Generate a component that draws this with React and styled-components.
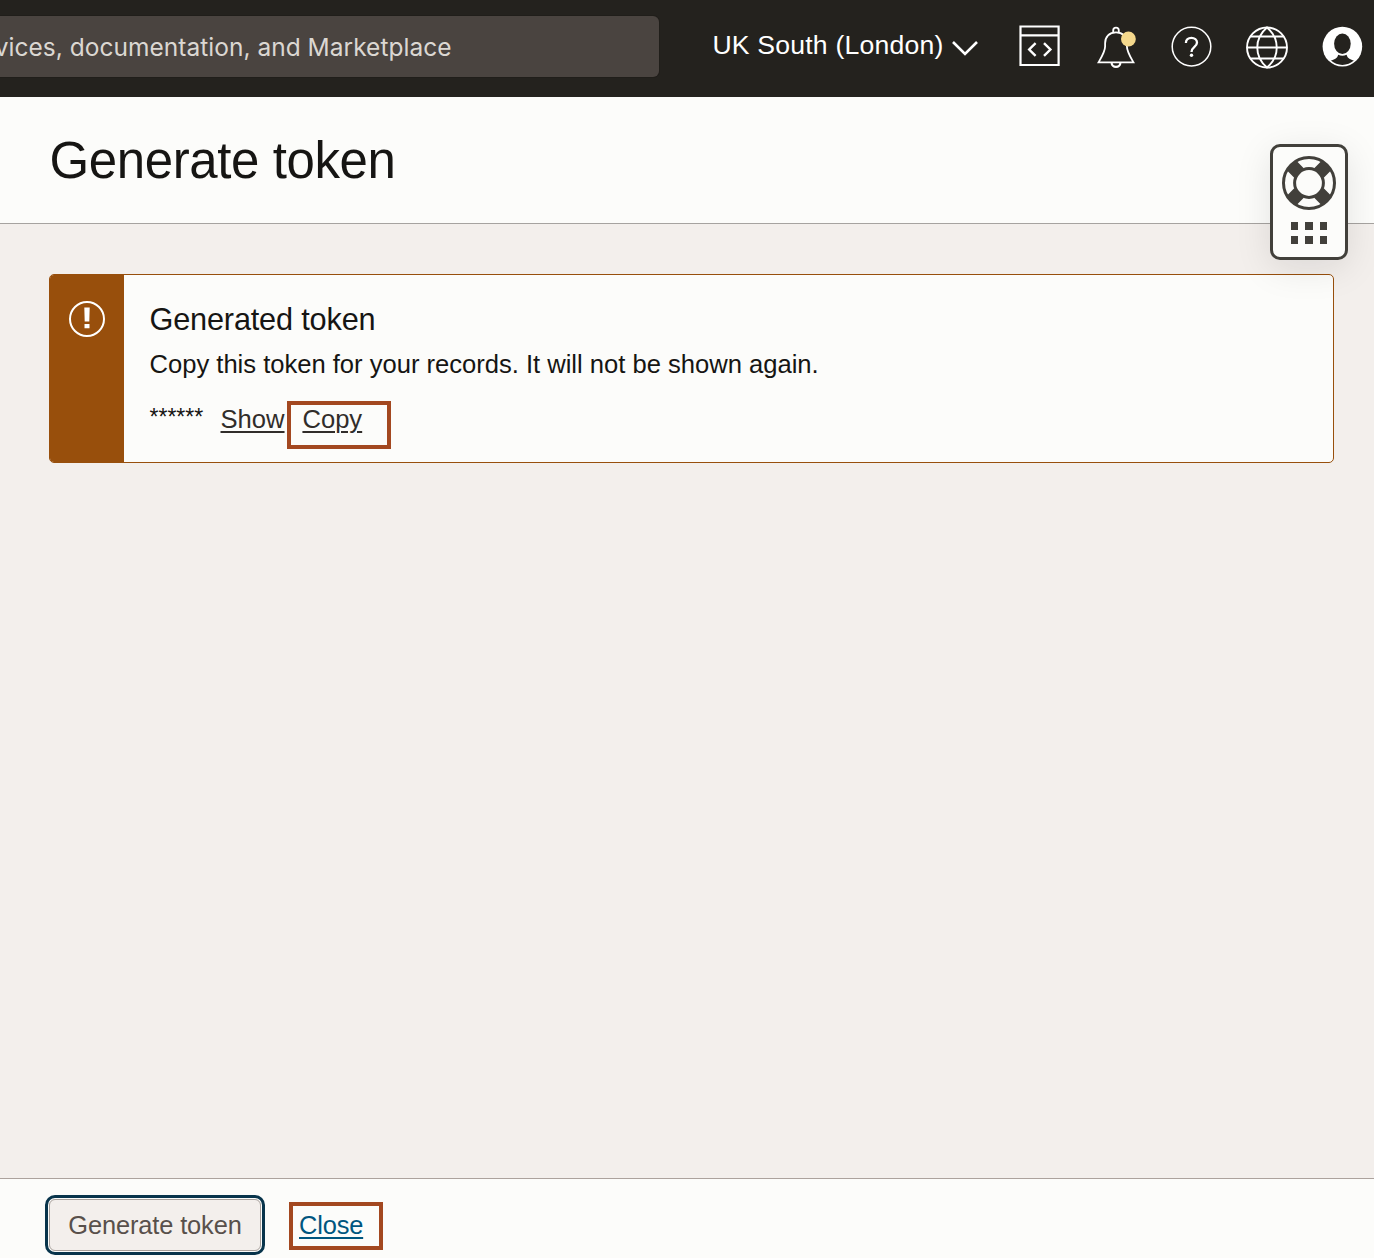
import React from "react";
import styled, { createGlobalStyle } from "styled-components";

const GlobalStyle = createGlobalStyle`
  *, *::before, *::after { box-sizing: border-box; }
  body {
    margin: 0;
    background: #f3efec;
    font-family: "Liberation Sans", Arial, sans-serif;
    color: #161513;
    overflow: hidden;
  }
  h1, h2, p { margin: 0; font-weight: 400; }
`;

const Page = styled.div`
  position: relative;
  display: flex;
  flex-direction: column;
  height: 1258px;
  overflow: hidden;
`;

const TopBar = styled.header`
  display: flex;
  align-items: flex-start;
  flex: none;
  height: 97px;
  background: #24221e;
`;

const SearchBox = styled.div`
  display: flex;
  align-items: center;
  justify-content: flex-end;
  width: 659px;
  height: 61px;
  margin-top: 16px;
  padding: 2px 207.5px 0 0;
  border-radius: 0 6px 6px 0;
  background: #4a4440;
  box-shadow: 0 0 0 1px #201e1a;
  color: #dbd7d2;
  overflow: hidden;
  white-space: nowrap;
  font: 400 24.5px/59px Inter, "Liberation Sans", sans-serif;
  letter-spacing: 0.02px;
`;

const Region = styled.button`
  display: flex;
  align-items: flex-start;
  gap: 8.6px;
  margin: 29px 0 0 53.4px;
  padding: 0;
  border: 0;
  background: none;
  color: #fff;
  white-space: nowrap;
  font: 400 26.6px/32px "Liberation Sans", Arial, sans-serif;
  letter-spacing: 0.2px;
  svg { margin-top: 9.5px; flex: none; }
`;

const Tools = styled.nav`
  display: flex;
  align-items: center;
  gap: 31px;
  height: 48px;
  margin: 23px 10px 0 auto;
`;

const Tool = styled.span`
  display: flex;
  width: 44px;
  height: 48px;
  svg { overflow: visible; }
`;

const TitleBar = styled.div`
  flex: none;
  height: 127px;
  padding: 35px 49px 0 49.5px;
  border-bottom: 1px solid #a6a3a0;
  background: #fcfcfa;
`;

const Title = styled.h1`
  font-size: 51px;
  line-height: 58px;
  letter-spacing: -0.4px;
`;

const Body = styled.main`
  flex: 1;
  padding: 50px 40px 0 49px;
  background: #f3efec;
`;

const Notice = styled.section`
  display: flex;
  height: 189px;
  border: 1px solid #984f0c;
  border-radius: 5px;
  background: #fcfcfa;
  overflow: hidden;
`;

const NoticeStripe = styled.div`
  display: flex;
  justify-content: center;
  width: 74px;
  padding-top: 25px;
  background: #984f0c;
`;

const NoticeText = styled.div`
  padding: 27px 0 0 25.5px;
`;

const NoticeTitle = styled.h2`
  font-size: 30.7px;
  line-height: 36px;
  letter-spacing: -0.18px;
`;

const NoticeLine = styled.p`
  margin-top: 10px;
  font-size: 25.6px;
  line-height: 32px;
  letter-spacing: -0.015px;
  white-space: nowrap;
`;

const TokenRow = styled.div`
  display: flex;
  align-items: flex-start;
  margin-top: 23px;
  font-size: 25.6px;
  line-height: 32px;
`;

const Mask = styled.span`
  width: 71px;
  margin-top: -2px;
  font-size: 23px;
`;

const Link = styled.a`
  color: ${(p) => p.$color || "#312d2a"};
  text-decoration: underline;
  text-decoration-thickness: 2px;
  text-underline-offset: 3px;
`;

const Highlight = styled.span`
  display: flex;
  flex: none;
  width: ${(p) => p.$width}px;
  height: 48px;
  padding: ${(p) => p.$pad};
  border: 4px solid #a34820;
`;

const CopyHighlight = styled(Highlight)`
  margin: -2px 0 0 2.5px;
  line-height: 28px;
`;

const Footer = styled.footer`
  display: flex;
  flex: none;
  height: 80px;
  padding: 16px 45px 0;
  gap: 24px;
  border-top: 1px solid #aca29d;
  background: #fcfcfa;
  font-size: 25.4px;
  line-height: 32px;
`;

const FocusRing = styled.div`
  width: 220px;
  height: 60px;
  padding: 1px;
  border: 3px solid #08344b;
  border-radius: 10px;
`;

const GenerateButton = styled.button`
  display: block;
  width: 100%;
  height: 100%;
  padding: 0;
  border: 1px solid #a79f9a;
  border-radius: 6px;
  background: #f3efec;
  color: #58504b;
  font: 400 25.4px/50px "Liberation Sans", Arial, sans-serif;
  letter-spacing: -0.12px;
  white-space: nowrap;
`;

const CloseHighlight = styled(Highlight)`
  margin-top: 7px;
  letter-spacing: -0.15px;
`;

const HelpWidget = styled.aside`
  position: absolute;
  left: 1270px;
  top: 144px;
  display: flex;
  flex-direction: column;
  align-items: center;
  width: 78px;
  height: 116px;
  padding-top: 9px;
  border: 3px solid #42403b;
  border-radius: 10px;
  background: #fcfcfa;
  box-shadow: 0 8px 36px rgba(22, 21, 19, 0.1);
`;

const DotGrid = styled.div`
  display: grid;
  grid-template-columns: 7px 8px 7px;
  gap: 6px 7px;
  margin-top: 12px;
`;

const Dot = styled.i`
  height: 8px;
  background: #42403b;
`;

const Chevron = () => (
  <svg width="26" height="18" viewBox="0 0 26 18" fill="none" stroke="#fff" strokeWidth="2.6">
    <path d="M1 3 13 15 25 3" />
  </svg>
);

const ConsoleIcon = () => (
  <svg width="44" height="48" viewBox="0 0 44 48" fill="none" stroke="#fff" strokeWidth="2.2">
    <path d="M.5 3.5H38.6V42H.5ZM.5 12.3H38.6" />
    <path d="M15.6 20.2 9.2 26.5 15.6 32.8M24 20.2 30.4 26.5 24 32.8" strokeWidth="2.4" />
  </svg>
);

const BellIcon = () => (
  <svg width="44" height="48" viewBox="0 0 44 48" fill="none" stroke="#fff" strokeWidth="1.8">
    <g transform="translate(-1 0)">
      <path d="M19.2 9.6V7.5a2.8 2.8 0 0 1 5.6 0V9.6" />
      <path d="M4.6 39.3C8.5 32.6 11.1 28.3 11.1 23.5V20.3C11.1 13.6 15.3 9.3 22 9.3S32.9 13.6 32.9 20.3V23.5C32.9 28.3 35.5 32.6 39.4 39.3Z" />
      <path d="M17.6 39.5a4.4 4.4 0 0 0 8.8 0" strokeWidth="2.2" />
      <circle cx="34.4" cy="16" r="7.4" fill="#f4d88c" stroke="none" />
    </g>
  </svg>
);

const QuestionIcon = () => (
  <svg width="44" height="48" viewBox="0 0 44 48" fill="none" stroke="#fff">
    <circle cx="21.5" cy="23.6" r="19.3" strokeWidth="1.5" />
    <path d="M15.9 19.9C15.9 16.7 18.3 14.9 21.4 14.9S27 16.8 27 19.6C27 24.2 21.5 23.6 21.5 29.1" strokeWidth="2.3" />
    <circle cx="21.5" cy="32.3" r="1.7" fill="#fff" stroke="none" />
  </svg>
);

const GlobeIcon = () => (
  <svg width="44" height="48" viewBox="0 0 44 48" fill="none" stroke="#fff" strokeWidth="1.9">
    <circle cx="22" cy="24.5" r="20" />
    <path d="M22 4.5C9 15.5 9 33.5 22 44.5C35 33.5 35 15.5 22 4.5ZM2 24.5H42M5.5 13.5H38.5M5.5 35.5H38.5" />
  </svg>
);

const UserIcon = () => (
  <svg width="44" height="48" viewBox="0 0 44 48">
    <circle cx="22.4" cy="23.6" r="19.8" fill="#fff" />
    <ellipse cx="22.4" cy="20.7" rx="8.3" ry="10.3" fill="#24221e" />
    <path d="M10.9 37.6C14 36.4 17.3 35.6 18.2 31.7Q22.4 34 26.6 31.7C27.5 35.6 30.8 36.4 33.9 37.6C28 43.3 16.8 43.3 10.9 37.6Z" fill="#24221e" />
  </svg>
);

const AlertIcon = () => (
  <svg width="38" height="38" viewBox="0 0 38 38">
    <circle cx="19" cy="19" r="17" fill="none" stroke="#fff" strokeWidth="2" />
    <path d="M16.3 7.5H21.7L21.3 21.4H16.7ZM16.5 24H21.5V28.2H16.5Z" fill="#fff" />
  </svg>
);

const LifebuoyIcon = () => (
  <svg width="54" height="54" viewBox="0 0 54 54" fill="none" stroke="#42403b">
    <circle cx="27" cy="27" r="25.5" strokeWidth="3" />
    <circle cx="27" cy="27" r="14.4" strokeWidth="3" />
    <path d="M17 17 9.6 9.6M37 17 44.4 9.6M17 37 9.6 44.4M37 37 44.4 44.4" strokeWidth="13.5" />
  </svg>
);

export default function App() {
  return (
    <>
      <GlobalStyle />
      <Page>
        <TopBar>
          <SearchBox>vices, documentation, and Marketplace</SearchBox>
          <Region>
            UK South (London)
            <Chevron />
          </Region>
          <Tools>
            <Tool><ConsoleIcon /></Tool>
            <Tool><BellIcon /></Tool>
            <Tool><QuestionIcon /></Tool>
            <Tool><GlobeIcon /></Tool>
            <Tool><UserIcon /></Tool>
          </Tools>
        </TopBar>
        <TitleBar>
          <Title>Generate token</Title>
        </TitleBar>
        <Body>
          <Notice>
            <NoticeStripe><AlertIcon /></NoticeStripe>
            <NoticeText>
              <NoticeTitle>Generated token</NoticeTitle>
              <NoticeLine>Copy this token for your records. It will not be shown again.</NoticeLine>
              <TokenRow>
                <Mask>******</Mask>
                <Link>Show</Link>
                <CopyHighlight $width={104} $pad="0 0 0 11.4px">
                  <Link>Copy</Link>
                </CopyHighlight>
              </TokenRow>
            </NoticeText>
          </Notice>
        </Body>
        <Footer>
          <FocusRing>
            <GenerateButton>Generate token</GenerateButton>
          </FocusRing>
          <CloseHighlight $width={94} $pad="3px 0 0 6px">
            <Link $color="#00567f">Close</Link>
          </CloseHighlight>
        </Footer>
        <HelpWidget>
          <LifebuoyIcon />
          <DotGrid>
            {[0, 1, 2, 3, 4, 5].map((n) => <Dot key={n} />)}
          </DotGrid>
        </HelpWidget>
      </Page>
    </>
  );
}
